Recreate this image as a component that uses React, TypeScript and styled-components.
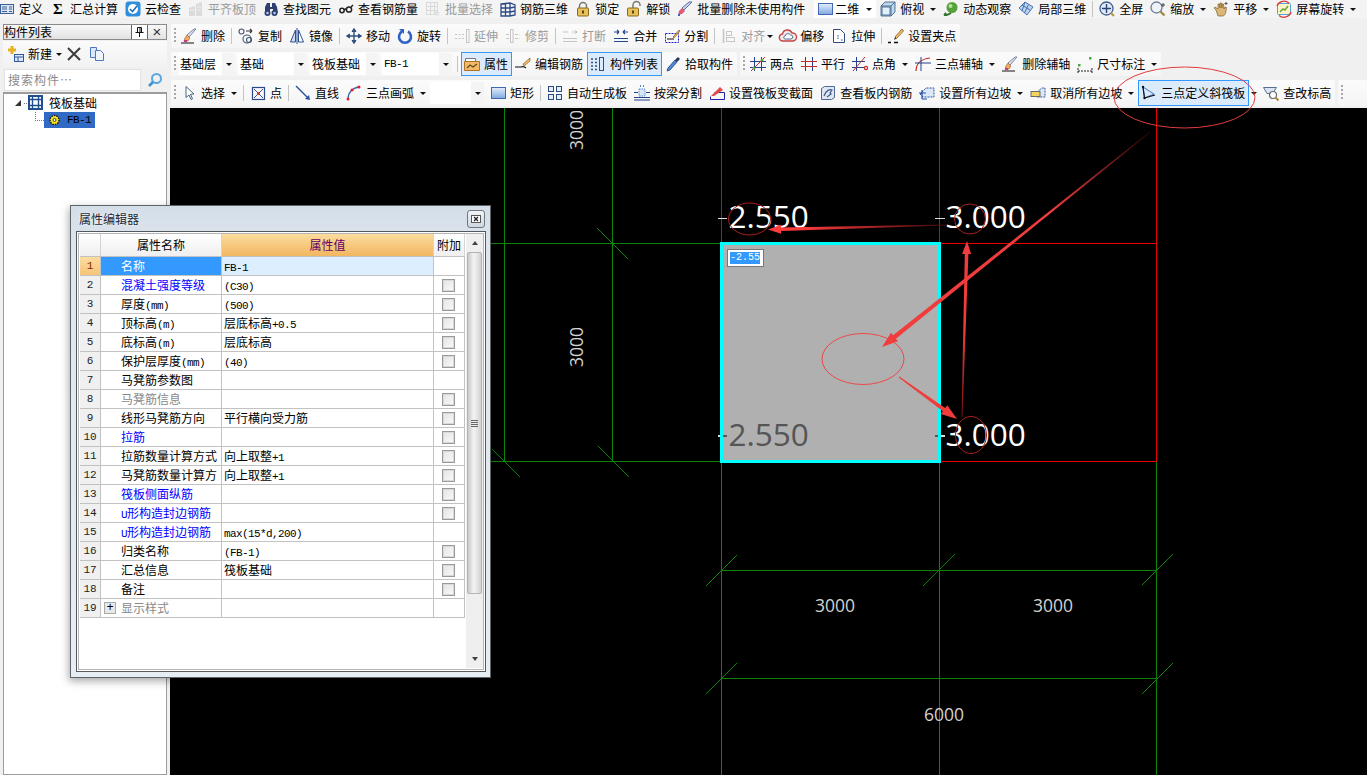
import React from "react";
import styled, { createGlobalStyle } from "styled-components";

const CJK = '"Noto Sans CJK SC", "Noto Sans", sans-serif';

const GlobalStyle = createGlobalStyle`
  html, body { margin: 0; padding: 0; background: #f0f0f0; }
  body { font: 12px/16px ${CJK}; color: #000; overflow: hidden; }
  * { box-sizing: border-box; }
`;

const Page = styled.div`
  position: relative;
  width: 1367px;
  height: 775px;
  overflow: hidden;
  display: flex;
  flex-direction: column;
  background: #f0f0f0;
`;

const TopBar = styled.div`
  height: 18px;
  flex: none;
  margin-left: -4px;
  display: flex;
  align-items: center;
  background: #f4f4f4;
`;

const Body = styled.div`
  flex: 1;
  min-height: 0;
  display: flex;
`;

const Main = styled.div`
  flex: 1;
  min-width: 0;
  display: flex;
  flex-direction: column;
  padding-top: 6px;
`;

const ToolRow = styled.div<{ $h?: number; $after?: number }>`
  flex: none;
  height: ${(p) => p.$h ?? 24}px;
  margin: 0 0 ${(p) => p.$after ?? 4}px 1px;
  display: flex;
  gap: 3px;
`;

const Segment = styled.div<{ $grow?: boolean }>`
  display: flex;
  align-items: center;
  height: 100%;
  flex: ${(p) => (p.$grow ? 1 : "none")};
  background: linear-gradient(#fbfbfb, #f5f5f5);
  border-radius: 2px;
`;

const Gripper = styled.i`
  width: 2px;
  height: 16px;
  margin: 0 2px 0 3px;
  flex: none;
  background: repeating-linear-gradient(#a8a8a8 0 2px, transparent 2px 4px);
`;

const Sep = styled.i`
  width: 1px;
  height: 16px;
  margin: 0 3px 0 2px;
  flex: none;
  background: #c4c4c4;
`;

const Tool = styled.div<{ $dim?: boolean; $on?: boolean }>`
  display: flex;
  align-items: center;
  flex: none;
  gap: 4px;
  height: ${(p) => (p.$on ? "100%" : "auto")};
  padding: ${(p) => (p.$on ? "0 3px 0 2px" : "0 4px 0 3px")};
  white-space: nowrap;
  color: ${(p) => (p.$dim ? "#9a9a9a" : "#000")};
  border: ${(p) => (p.$on ? "1px solid #3399ff" : "0")};
  background: ${(p) => (p.$on ? "#dcebfb" : "transparent")};
`;

const Glyph = styled.svg<{ $dim?: boolean }>`
  width: 16px;
  height: 16px;
  flex: none;
  overflow: visible;
  opacity: ${(p) => (p.$dim ? 0.45 : 1)};
`;

const Sigma = styled.b`
  width: 16px;
  text-align: center;
  font: bold 15px/16px "Liberation Serif", serif;
  flex: none;
`;

const Caret = styled.i<{ $m?: number; $after?: number }>`
  width: 0;
  height: 0;
  flex: none;
  margin-left: ${(p) => p.$m ?? 2}px;
  margin-right: ${(p) => p.$after ?? 0}px;
  border-left: 3px solid transparent;
  border-right: 3px solid transparent;
  border-top: 3px solid #111;
`;

const ViewMode = styled.div`
  display: flex;
  align-items: center;
  gap: 2px;
  width: 62px;
  height: 18px;
  margin: 0 1px 0 5px;
  padding-left: 3px;
  background: #fff;
  flex: none;
`;

const Combo = styled.div<{ $w: number }>`
  display: flex;
  align-items: center;
  justify-content: space-between;
  width: ${(p) => p.$w}px;
  height: 22px;
  margin-right: 3px;
  padding-left: 2px;
  flex: none;
  background: #fff;
`;

const ComboArrow = styled.div`
  width: 13px;
  height: 22px;
  display: flex;
  align-items: center;
  justify-content: center;
  background: #f4f4f4;
`;

const Latin = styled.span`
  font: 11px/1 "Liberation Mono", monospace;
  letter-spacing: -0.6px;
`;

/* ascii runs sit at half a CJK cell, like the bitmap font of the original */
const Txt = ({ s }: { s: string }) => (
  <>
    {s.split(/([\x00-\x7f]+)/).map((part, i) =>
      /^[\x00-\x7f]+$/.test(part) ? <Latin key={i}>{part}</Latin> : part
    )}
  </>
);

const ICONS: Record<string, React.ReactNode> = {
  define: (
    <g fill="none" stroke="#3c5f95">
      <rect x="1.5" y="3.5" width="13" height="9" fill="#dbe6f3" />
      <path d="M3 6h5M3 8h5M3 10.500h5M10 6h3M10 8h3M10 10.500h3" />
    </g>
  ),
  cloud: (
    <g>
      <rect x="0.500" y="0.500" width="15" height="15" rx="3" fill="#2f8fdd" />
      <circle cx="8" cy="8" r="5" fill="#fff" />
      <path d="M5 8l2.500 2.500L12 5" fill="none" stroke="#1f6fb8" strokeWidth="1.600" />
    </g>
  ),
  plate: (
    <g fill="#bdbdbd">
      <path d="M1 15V7l6-2v10zM8 15V3l6-2v14z" />
      <path d="M2 9h4M9 6h4M9 9h4" stroke="#eee" />
    </g>
  ),
  binoc: (
    <g fill="#2d3f73">
      <path d="M2 6l2-4h3v4h2V2h3l2 4 1 6h-5V8H7v4H2z" />
      <circle cx="4.500" cy="12" r="3" />
      <circle cx="11.500" cy="12" r="3" />
      <circle cx="4.500" cy="12" r="1.300" fill="#b8c8ea" />
      <circle cx="11.500" cy="12" r="1.300" fill="#b8c8ea" />
    </g>
  ),
  glasses: (
    <g fill="none" stroke="#222" strokeWidth="1.500">
      <circle cx="4" cy="9.500" r="2.200" />
      <circle cx="11" cy="8.500" r="2.600" />
      <path d="M6 9c1-1 2-1 2.500-.5M13 6l2-2" />
    </g>
  ),
  batch: (
    <g fill="none" stroke="#bbb">
      <rect x="1.500" y="1.500" width="11" height="12" />
      <path d="M1.500 5.500h11M1.500 9.500h11M5.500 1.500v12M9.500 1.500v12" />
      <path d="M10 9l5 3-2 1 1 2-1 .5-1-2-2 1z" fill="#ccc" stroke="none" />
    </g>
  ),
  rebar3d: (
    <g fill="none" stroke="#2c4a86" strokeWidth="1.300">
      <path d="M1 3l9-1 5 2v10l-5 1H1zM1 3v12M10 2v13M1 7h9l5-1M1 11h9l5-1M5.500 3v12" />
    </g>
  ),
  lock: (
    <g>
      <path d="M4.500 7V5a3.500 3.500 0 017 0v2" fill="none" stroke="#777" strokeWidth="1.500" />
      <rect x="2.500" y="7" width="11" height="8" rx="1" fill="#e8c15a" stroke="#8b6b1e" />
      <rect x="7" y="9.500" width="2" height="3" fill="#5a4310" />
    </g>
  ),
  unlock: (
    <g>
      <path d="M7 7V4a3.500 3.500 0 017 0v1" fill="none" stroke="#777" strokeWidth="1.500" />
      <rect x="1.500" y="7" width="11" height="8" rx="1" fill="#e8c15a" stroke="#8b6b1e" />
      <rect x="6" y="9.500" width="2" height="3" fill="#5a4310" />
    </g>
  ),
  brushBlue: (
    <g>
      <path d="M15 1L7 9l-2-2 7-6z" fill="#c9d4ea" stroke="#5a6f9f" />
      <path d="M5 7l3 3-3 3-4 1 1-4z" fill="#e05a7a" />
      <path d="M1 14h2" stroke="#3b66c4" strokeWidth="2" />
    </g>
  ),
  rect2d: (
    <g>
      <rect x="1.500" y="2.500" width="14" height="11" fill="url(#blueFill)" stroke="#4169b0" />
    </g>
  ),
  cube: (
    <g stroke="#33557f" strokeWidth="0.800">
      <path d="M1 5l4-4h10v10l-4 4H1z" fill="#bcd9ee" />
      <path d="M1 5h10v10M11 5l4-4" fill="none" />
      <path d="M2 6h8v8H2z" fill="#e2f0fa" />
    </g>
  ),
  orbit: (
    <g>
      <circle cx="9" cy="6.500" r="5.500" fill="#53a33a" />
      <circle cx="7.500" cy="5" r="2" fill="#b6e29a" />
      <path d="M1 13c2 2 4 1 7-1" fill="none" stroke="#2f6f28" strokeWidth="2" />
      <path d="M1 15l1-4 3 3z" fill="#2f6f28" />
    </g>
  ),
  local3d: (
    <g fill="#bcd4f0" stroke="#3b66a8" strokeWidth="0.900">
      <path d="M1 7l6-6 8 5-6 8z" />
      <path d="M4 4l8 5M7 1l-3 9M10.500 3.500L6.500 12" fill="none" />
    </g>
  ),
  fullscreen: (
    <g>
      <circle cx="7.500" cy="7.500" r="6.500" fill="#e2eaf5" stroke="#3f5f8f" strokeWidth="1.300" />
      <path d="M7.500 3v9M3 7.500h9" stroke="#27437a" strokeWidth="1.400" />
      <path d="M12 12l3 3" stroke="#b99a4a" strokeWidth="2.200" />
    </g>
  ),
  zoomTool: (
    <g>
      <circle cx="6.500" cy="6.500" r="5.500" fill="#eef3f9" stroke="#6f7f96" strokeWidth="1.300" />
      <path d="M10.500 10.500l4 4" stroke="#a58a3e" strokeWidth="2.400" />
      <path d="M13 2v4M11 4h4" stroke="#444" />
    </g>
  ),
  hand: (
    <g>
      <path d="M3 9l-2-2 1-1 3 2V3l1.500 0 .5 4V2h1.500l.5 5V3h1.500l.5 5 1-2 1.500.5-1 6-2 2.500H5z" fill="#dcb878" stroke="#7b5f2c" strokeWidth="0.700" />
      <path d="M13 1v3M11.500 2.500h3" stroke="#555" />
    </g>
  ),
  screenRot: (
    <g>
      <rect x="1.500" y="2.500" width="13" height="11" rx="1" fill="#fff4c8" stroke="#57a0d8" />
      <path d="M4 11l3-3 2 1 3-4" fill="none" stroke="#6aa63a" strokeWidth="1.500" />
      <path d="M1 5a7.500 7.500 0 0112-3M15 11a7.500 7.500 0 01-12 3.500" fill="none" stroke="#d93a3a" strokeWidth="1.300" />
    </g>
  ),
  erase: (
    <g>
      <path d="M15 1L8 9 6 7l7-6z" fill="#dfe3ee" stroke="#7a86a5" />
      <path d="M6 7l3 3-2 3H3l1-3z" fill="#f0a868" stroke="#a66a2e" strokeWidth="0.700" />
      <path d="M0 15h13" stroke="#111" />
      <path d="M3 13h3" stroke="#c33b7d" strokeWidth="2" />
    </g>
  ),
  copy: (
    <g fill="none" stroke="#44546f" strokeWidth="1.100">
      <circle cx="3.500" cy="3.500" r="2.500" />
      <circle cx="9" cy="11" r="4" />
      <circle cx="11" cy="12" r="2.500" />
      <path d="M8 3h6M14 3l-2-2M14 3l-2 2" stroke="#333" />
    </g>
  ),
  mirror: (
    <g stroke="#2d4f8f" fill="#cfe0f5">
      <path d="M6.500 2L1.500 14h5z" />
      <path d="M9.500 2l5 12h-5z" fill="#fff" />
      <path d="M8 0v16" fill="none" />
    </g>
  ),
  move: (
    <g fill="#33507f" stroke="#33507f">
      <path d="M8 1v14M1 8h14" fill="none" strokeWidth="1.400" />
      <path d="M8 .500L6 3.500h4zM8 15.500l-2-3h4zM.500 8l3-2v4zM15.500 8l-3-2v4z" />
    </g>
  ),
  rotate: (
    <g>
      <path d="M5 3.500a6 6 0 106 0" fill="none" stroke="#2f62c4" strokeWidth="2.600" />
      <path d="M2 1l5 0 0 5z" fill="#2f62c4" />
    </g>
  ),
  extend: (
    <g stroke="#888" fill="none">
      <path d="M1 6.500h10M1 10.500h10" strokeDasharray="2 1.500" />
      <rect x="12.500" y="1.500" width="2.500" height="13" fill="#fff" />
    </g>
  ),
  trim: (
    <g stroke="#888" fill="none">
      <path d="M1 6.500h14M1 10.500h14" strokeDasharray="3 1.500" />
      <rect x="5.500" y="1.500" width="2.500" height="13" fill="#fff" />
    </g>
  ),
  breakLine: (
    <g stroke="#888" fill="none">
      <path d="M1 4h5M10 4h5M13 2l2 2-2 2M1 13.500h14M1 10.500h14" />
    </g>
  ),
  merge: (
    <g stroke="#24488f" fill="none" strokeWidth="1.200">
      <path d="M1 4h5M6 4L4 2M6 4L4 6M15 4h-5M10 4l2-2M10 4l2 2M1 10.500h14M1 13.500h14" />
    </g>
  ),
  split: (
    <g fill="none">
      <rect x="1.500" y="5.500" width="13" height="9" stroke="#2222cc" strokeDasharray="2 1" />
      <path d="M3 11h7" stroke="#111" />
      <path d="M9 9l6-7 1 1-6 7z" fill="#f4b060" stroke="#8a5c1c" strokeWidth="0.700" />
    </g>
  ),
  alignTool: (
    <g stroke="#8c8c8c" fill="none">
      <path d="M2.500 1v14" strokeWidth="1.600" />
      <rect x="5.500" y="3.500" width="5" height="4" />
      <rect x="5.500" y="9.500" width="8" height="4" />
    </g>
  ),
  offset: (
    <g>
      <path d="M3 13a3.500 3.500 0 01-.5-7 5 5 0 019.500-1 4 4 0 011 8z" fill="#f7e8e8" stroke="#c44646" strokeWidth="1.400" />
      <path d="M5.500 11a1.500 1.500 0 01-.5-3 3 3 0 015.500-1 2 2 0 01.5 4z" fill="#fff" stroke="#4a6a9a" />
    </g>
  ),
  stretch: (
    <g fill="none" stroke="#2c4a80">
      <path d="M2.500 1.500h7l4 4v9h-11z" fill="#fff" />
      <path d="M7 7v5M10 12h2" strokeDasharray="1.500 1" />
    </g>
  ),
  grip: (
    <g>
      <path d="M14 1L7 9l1.500 1.500L15.500 3z" fill="#f0bd6c" stroke="#8a5c1c" strokeWidth="0.800" />
      <path d="M7 9l-1 3 2.500-1.500z" fill="#333" />
      <path d="M0 14.500h3M6 14.500h4" stroke="#111" strokeWidth="1.500" />
    </g>
  ),
  props: (
    <g>
      <path d="M1.500 2.500h10v3h-10z" fill="#fff" stroke="#777" />
      <path d="M.500 5.500h15v9H.500z" fill="#f5b864" stroke="#a9742a" />
      <path d="M3 12l3-3 3 2 4-3" fill="none" stroke="#5c4a22" strokeWidth="1.200" />
    </g>
  ),
  editBar: (
    <g>
      <path d="M15 2L8 8l1 2 6-5z" fill="#f0c070" stroke="#8a5c1c" strokeWidth="0.700" />
      <path d="M0 11h6c2-1 3-1 5 1" fill="none" stroke="#111" strokeWidth="1.200" />
    </g>
  ),
  listTool: (
    <g fill="none" stroke="#334f7e">
      <rect x="9.500" y="1.500" width="4" height="13" />
      <path d="M1 3h2M5 3h2M1 6.500h2M5 6.500h2M1 10h2M5 10h2M1 13.500h2M5 13.500h2" strokeWidth="1.300" />
    </g>
  ),
  pick: (
    <g>
      <path d="M13 1l2 2-3 3-2-2z" fill="#22365f" />
      <path d="M10 4l2 2-7 8-3 1 1-3z" fill="#4f88d8" stroke="#1f3e75" strokeWidth="0.800" />
    </g>
  ),
  twoPoint: (
    <g fill="none">
      <path d="M4.500 1v14M11.500 1v14M0 5.500h16M0 11.500h16" stroke="#27408b" />
      <path d="M1 15L15 1" stroke="#c82a2a" />
      <circle cx="4" cy="12" r="1.500" fill="#5ba33a" />
      <circle cx="12" cy="4" r="1.500" fill="#5ba33a" />
    </g>
  ),
  parallel: (
    <g fill="none">
      <path d="M4.500 1v14M11.500 1v14" stroke="#27408b" />
      <path d="M0 5.500h16M0 10.500h16" stroke="#c82a2a" />
    </g>
  ),
  angle: (
    <g fill="none">
      <path d="M4.500 1v14M0 5.500h13M0 11.500h13" stroke="#27408b" />
      <path d="M1 15L13 1" stroke="#c82a2a" />
      <circle cx="14" cy="12" r="1.600" stroke="#c82a2a" strokeWidth="1.200" />
    </g>
  ),
  threeAxis: (
    <g fill="none">
      <path d="M1 15C1 8 6 3 15 2" stroke="#c82a2a" strokeWidth="1.200" />
      <path d="M6 1v14M0 7h16" stroke="#27408b" />
    </g>
  ),
  dimension: (
    <g>
      <path d="M1 15h14M1 12v5M15 12v5" stroke="#222" strokeDasharray="2 1" />
      <rect x="1" y="8" width="2.500" height="2.500" fill="#4aa84a" />
      <rect x="12" y="1" width="2.500" height="2.500" fill="#4aa84a" />
    </g>
  ),
  select: (
    <path d="M5 1.500v11l3-2.500 2 4.500 1.500-.7-2-4.500 3.500-.3z" fill="#fff" stroke="#4c6384" />
  ),
  point: (
    <g fill="none">
      <rect x="2.500" y="2.500" width="12" height="12" stroke="#2c4a86" strokeWidth="1.200" />
      <path d="M4 4l9 9M13 4l-9 9" stroke="#3d4fb0" />
      <circle cx="8.500" cy="8.500" r="1.200" fill="#c22" />
    </g>
  ),
  line: (
    <g>
      <path d="M1 1l12 12" stroke="#27549a" strokeWidth="1.400" />
      <path d="M15 15l-5-1 4-4z" fill="#27549a" />
    </g>
  ),
  arc: (
    <g fill="none">
      <path d="M2 14C2 8 6 3 13 2" stroke="#3a65b8" strokeWidth="1.300" />
      <circle cx="2" cy="14" r="1.500" fill="#d23" />
      <circle cx="6" cy="5" r="1.500" fill="#d23" />
      <circle cx="13" cy="2" r="1.500" fill="#d23" />
    </g>
  ),
  auto: (
    <g fill="#e6eef9" stroke="#2c4a80">
      <rect x="1.500" y="1.500" width="5" height="5" />
      <rect x="9.500" y="1.500" width="5" height="5" />
      <rect x="1.500" y="9.500" width="5" height="5" />
      <rect x="9.500" y="9.500" width="5" height="5" />
    </g>
  ),
  beamSplit: (
    <g fill="none">
      <path d="M0 12.500h16M0 15h16" stroke="#27408b" />
      <path d="M0 7.500h4M12 7.500h4" stroke="#27408b" />
      <rect x="5" y="4" width="6" height="7" fill="#d8e6fa" stroke="#5a86cc" strokeDasharray="1.500 1" />
      <path d="M6 1h1M9 1h1" stroke="#5a86cc" strokeWidth="2" />
    </g>
  ),
  section: (
    <g fill="none">
      <path d="M5.500 7.500h10v7h-14v-3" stroke="#2222aa" />
      <path d="M2 11l9-9 3 3-9 6z" fill="#e34b4b" />
    </g>
  ),
  viewBar: (
    <g>
      <path d="M1.500 3.500l3-2h10v11l-3 2h-10z" fill="#dfe7f3" stroke="#4e6a94" />
      <path d="M4 11c2-6 6-7 8-6l-2 3 1 1-4 3" fill="none" stroke="#3b5a8c" strokeWidth="1.200" />
    </g>
  ),
  slopeAll: (
    <g fill="none">
      <path d="M1 9l6-6h8v9H4z" fill="#dce8f8" stroke="#2f5aa0" strokeDasharray="2 1" />
      <path d="M0 8h7M3 5v9M3 14h5" stroke="#1e4aa5" strokeWidth="1.200" />
    </g>
  ),
  slopeNone: (
    <g>
      <path d="M7 7l5-4h3v9H7z" fill="#dce8f8" stroke="#2f5aa0" strokeDasharray="2 1" />
      <rect x="1" y="6.500" width="9" height="5" fill="#f2d65c" stroke="#6a6a6a" />
    </g>
  ),
  threeSlope: (
    <g fill="none">
      <path d="M2 2l1.500 11L13 9z" fill="#dbe8fa" stroke="#4577c8" />
      <path d="M2 2l1.500 11M3.500 13L14 10" stroke="#111" strokeWidth="1.200" />
      <circle cx="2" cy="2" r="1.200" fill="#111" />
      <circle cx="3.500" cy="13" r="1.200" fill="#111" />
    </g>
  ),
  changeElev: (
    <g>
      <path d="M.500 2.500h13l-4 6H4z" fill="#dbe4f2" stroke="#5a6f90" />
      <circle cx="10" cy="10" r="3.500" fill="#fff" stroke="#6a6a6a" strokeWidth="1.200" />
      <path d="M12.500 12.500l3 3" stroke="#a58a3e" strokeWidth="2" />
    </g>
  ),
  newItem: (
    <g>
      <path d="M4 0v8M0 4h8" stroke="#e6b422" strokeWidth="3" />
      <rect x="6.500" y="8.500" width="9" height="7" fill="#dce8f8" stroke="#2f5aa0" />
      <path d="M6.500 11h9M10 11v4.500" stroke="#2f5aa0" />
    </g>
  ),
  xDelete: <path d="M2 2l12 12M14 2L2 14" stroke="#3d3d3d" strokeWidth="2" />,
  copyDoc: (
    <g fill="#dbe8fa" stroke="#4a78c0">
      <path d="M1.500 1.500h6v10h-6z" />
      <path d="M6.500 4.500h5l3 3v7h-8z" fill="#eff5fd" />
    </g>
  ),
  magnify: (
    <g fill="none">
      <circle cx="9.500" cy="6.500" r="4.500" stroke="#5aa7e0" strokeWidth="2" />
      <path d="M6 10l-4 4" stroke="#3f92d2" strokeWidth="2.600" />
    </g>
  ),
  raft: (
    <g fill="none" stroke="#1f4f8f">
      <rect x="0" y="1" width="13" height="13" strokeWidth="2" />
      <path d="M0 4.500h13M0 10.500h13M3.500 1v13M9.500 1v13" strokeWidth="1.400" />
    </g>
  ),
  gear: (
    <g>
      <circle cx="6.500" cy="8" r="4.500" fill="#f8e81c" stroke="#111" strokeWidth="1.400" strokeDasharray="1.500 1" />
      <circle cx="6.500" cy="8" r="1.500" fill="#fff" stroke="#111" strokeWidth="0.800" />
    </g>
  ),
};

const Icon = ({ name, dim }: { name: string; dim?: boolean }) => (
  <Glyph viewBox="0 0 16 16" $dim={dim}>
    {ICONS[name]}
  </Glyph>
);

type ToolFlags = { caret: boolean; near: boolean; dim: boolean; on: boolean };
type ToolDef = ({ i: string; t: string } & Partial<ToolFlags>) | "sep";

const tool = (i: string, t: string, flags: Partial<ToolFlags> = {}): ToolDef => ({
  i,
  t,
  ...flags,
});

const renderTools = (list: ToolDef[]) =>
  list.map((d, n) =>
    d === "sep" ? (
      <Sep key={n} />
    ) : (
      <Tool key={n} $dim={d.dim} $on={d.on}>
        <Icon name={d.i} dim={d.dim} />
        <span>{d.t}</span>
        {d.caret && <Caret $m={d.near ? -2 : 2} />}
      </Tool>
    )
  );

const topLeft: ToolDef[] = [tool("define", "定义")];
const topMiddle: ToolDef[] = [
  tool("cloud", "云检查"),
  tool("plate", "平齐板顶", { dim: true }),
  tool("binoc", "查找图元"),
  tool("glasses", "查看钢筋量"),
  tool("batch", "批量选择", { dim: true }),
  tool("rebar3d", "钢筋三维"),
  tool("lock", "锁定"),
  tool("unlock", "解锁"),
  tool("brushBlue", "批量删除未使用构件"),
];
const topRight: ToolDef[] = [
  tool("cube", "俯视", { caret: true }),
  tool("orbit", "动态观察"),
  tool("local3d", "局部三维"),
  "sep",
  tool("fullscreen", "全屏"),
  tool("zoomTool", "缩放", { caret: true }),
  tool("hand", "平移", { caret: true }),
  tool("screenRot", "屏幕旋转", { caret: true }),
];

const editTools: ToolDef[] = [
  tool("erase", "删除"),
  "sep",
  tool("copy", "复制"),
  tool("mirror", "镜像"),
  "sep",
  tool("move", "移动"),
  tool("rotate", "旋转"),
  "sep",
  tool("extend", "延伸", { dim: true }),
  tool("trim", "修剪", { dim: true }),
  "sep",
  tool("breakLine", "打断", { dim: true }),
  tool("merge", "合并"),
  tool("split", "分割"),
  "sep",
  tool("alignTool", "对齐", { dim: true, caret: true, near: true }),
  tool("offset", "偏移"),
  tool("stretch", "拉伸"),
  "sep",
  tool("grip", "设置夹点"),
];

const componentTools: ToolDef[] = [
  tool("props", "属性", { on: true }),
  tool("editBar", "编辑钢筋"),
  tool("listTool", "构件列表", { on: true }),
  tool("pick", "拾取构件"),
];

const axisTools: ToolDef[] = [
  tool("twoPoint", "两点"),
  tool("parallel", "平行"),
  tool("angle", "点角", { caret: true }),
  tool("threeAxis", "三点辅轴", { caret: true }),
  tool("erase", "删除辅轴"),
  tool("dimension", "尺寸标注", { caret: true }),
];

const drawLeft: ToolDef[] = [
  tool("select", "选择", { caret: true }),
  "sep",
  tool("point", "点"),
  "sep",
  tool("line", "直线"),
  tool("arc", "三点画弧", { caret: true }),
];
const drawRight: ToolDef[] = [
  tool("rect2d", "矩形"),
  "sep",
  tool("auto", "自动生成板"),
  tool("beamSplit", "按梁分割"),
  tool("section", "设置筏板变截面"),
  tool("viewBar", "查看板内钢筋"),
  tool("slopeAll", "设置所有边坡", { caret: true }),
  tool("slopeNone", "取消所有边坡", { caret: true }),
  tool("threeSlope", "三点定义斜筏板", { on: true }),
];

const LeftPanel = styled.aside`
  width: 167px;
  margin-right: 3px;
  flex: none;
  padding: 6px 0 0 3px;
  display: flex;
  flex-direction: column;
`;

const PanelTitle = styled.div`
  height: 16px;
  display: flex;
  align-items: center;
  justify-content: space-between;
  border: 1px solid #8a8a8a;
  background: linear-gradient(#f8f8f8, #e2e2e2);
  line-height: 14px;
`;

const PanelControls = styled.div`
  display: flex;
  align-items: center;
`;

const PinBox = styled.span`
  width: 17px;
  height: 14px;
  display: flex;
  align-items: center;
  justify-content: center;
  background: #fff;
  border-left: 1px solid #666;
  border-right: 1px solid #666;
`;

const CloseMark = styled.span`
  width: 18px;
  text-align: center;
  font: 15px/14px "Liberation Sans", sans-serif;
  color: #333;
`;

const PanelTools = styled.div`
  height: 26px;
  display: flex;
  align-items: center;
  gap: 4px;
  padding-left: 5px;
  margin-top: 1px;
  background: linear-gradient(#fafafa, #f2f2f2);
`;

const CopySlot = styled.span`
  display: flex;
  margin-left: 3px;
`;

const SearchRow = styled.div`
  height: 25px;
  display: flex;
  align-items: center;
  gap: 6px;
  padding-left: 1px;
`;

const SearchBox = styled.div`
  width: 137px;
  height: 22px;
  padding-left: 3px;
  line-height: 20px;
  color: #8a8a8a;
  background: #fff;
  border: 1px solid #e2e2e2;
  letter-spacing: 1px;
`;

const TreeBox = styled.div`
  flex: 1;
  display: flex;
  flex-direction: column;
  gap: 1px;
  background: #fff;
  border: 1px solid #9c9c9c;
  border-top-width: 2px;
  padding: 1px 0 0 10px;
`;

const TreeRow = styled.div`
  height: 16px;
  display: flex;
  align-items: center;
`;

const TreeArrow = styled.i`
  width: 0;
  height: 0;
  margin: 0 3px 0 1px;
  border-left: 6px solid transparent;
  border-bottom: 6px solid #333;
`;

const DotLine = styled.i`
  width: 5px;
  border-top: 1px dotted #777;
`;

const TreeLabel = styled.span`
  margin-left: 4px;
`;

const Elbow = styled.i`
  width: 9px;
  height: 9px;
  margin: -8px 0 0 21px;
  border-left: 1px dotted #777;
  border-bottom: 1px dotted #777;
`;

const TreeSelected = styled.div`
  display: flex;
  align-items: center;
  gap: 3px;
  width: 51px;
  height: 16px;
  padding-left: 4px;
  background: #316ac5;
`;

const Canvas = styled.div`
  position: relative;
  flex: 1;
  min-height: 0;
  background: #000;
`;

const Drawing = styled.svg`
  display: block;
  width: 100%;
  height: 100%;
`;

const ElevationInput = styled.div`
  position: absolute;
  left: 557px;
  top: 141px;
  width: 37px;
  height: 18px;
  padding: 2px 3px 2px 2px;
  background: #fff;
  border: 1px solid #777;
`;

const InputSelection = styled.span`
  display: block;
  height: 12px;
  background: #3399ff;
  color: #fff;
  font: 10px/12px "Liberation Mono", monospace;
`;

const Annotations = styled.svg`
  position: absolute;
  left: 0;
  top: 0;
  pointer-events: none;
`;

/* floating editor window */
const Dialog = styled.section`
  position: absolute;
  left: 70px;
  top: 205px;
  width: 421px;
  height: 473px;
  display: flex;
  flex-direction: column;
  padding: 0 4px 5px 5px;
  background: linear-gradient(#d4dee8, #dde6ee 40px, #e6edf3);
  border: 1px solid #5f6468;
  box-shadow: -1px 3px 8px rgba(0, 0, 0, 0.35);
`;

const DialogTitle = styled.header`
  flex: none;
  height: 25px;
  display: flex;
  align-items: center;
  justify-content: space-between;
  padding: 0 1px 0 3px;
  color: #1a2a3a;
  text-shadow: 0 0 3px #fff;
`;

const DialogClose = styled.button`
  width: 18px;
  height: 18px;
  padding: 0;
  display: flex;
  align-items: center;
  justify-content: center;
  background: linear-gradient(#f2f5f8, #cfd8e0);
  border: 1px solid #70787f;
  border-radius: 3px;
`;

const Frame = styled.div`
  flex: 1;
  min-height: 0;
  display: flex;
  padding: 2px 3px 3px 3px;
  background: #fff;
  border: 1px solid #55595d;
  box-shadow: inset 0 0 0 1px #fff, inset 0 0 0 2px #b5b5b5;
`;

const Table = styled.div`
  width: 385px;
  flex: none;
`;

const COLS = "21px 121px 212px 31px";

const HeadRow = styled.div`
  display: grid;
  grid-template-columns: ${COLS};
  height: 23px;
  border-bottom: 1px solid #c2c2c2;
`;

const HeadCell = styled.div<{ $value?: boolean }>`
  display: flex;
  align-items: center;
  justify-content: center;
  border-right: 1px solid #d4d4d4;
  color: ${(p) => (p.$value ? "#660066" : "#000")};
  background: ${(p) =>
    p.$value ? "linear-gradient(#fbdc9e, #f2b660)" : "linear-gradient(#fff, #efefef)"};
`;

const DataRow = styled.div`
  display: grid;
  grid-template-columns: ${COLS};
  grid-template-rows: 18px;
  height: 19px;
  border-bottom: 1px solid #c2c2c2;
`;

const NumCell = styled.div<{ $on?: boolean }>`
  display: flex;
  align-items: center;
  justify-content: center;
  font: 11px/16px "Liberation Mono", monospace;
  color: ${(p) => (p.$on ? "#8a2a00" : "#222")};
  background: ${(p) => (p.$on ? "linear-gradient(#fbdc9e, #f6c478)" : "#f0f0f0")};
  border-right: 1px solid #c2c2c2;
`;

type Tone = "normal" | "link" | "muted" | "selected";

const toneColor: Record<Tone, string> = {
  normal: "#000",
  link: "#0000ff",
  muted: "#888",
  selected: "#fff",
};

const NameCell = styled.div<{ $tone: Tone }>`
  position: relative;
  padding-left: 20px;
  line-height: 18px;
  white-space: nowrap;
  overflow: hidden;
  color: ${(p) => toneColor[p.$tone]};
  background: ${(p) => (p.$tone === "selected" ? "#3399ff" : "#fff")};
  border-right: 1px solid #c2c2c2;
`;

const ValueCell = styled.div<{ $on?: boolean }>`
  padding-left: 2px;
  line-height: 18px;
  white-space: nowrap;
  overflow: hidden;
  background: ${(p) => (p.$on ? "#ddeeff" : "#fff")};
  border-right: 1px solid #c2c2c2;
`;

const AddCell = styled.div`
  display: flex;
  align-items: center;
  justify-content: center;
  border-right: 1px solid #c2c2c2;
`;

const Check = styled.i`
  width: 13px;
  height: 13px;
  margin-left: -1px;
  background: linear-gradient(135deg, #e4e4e4, #fafafa);
  border: 1px solid #9a9a9a;
  box-shadow: inset 0 0 0 1px #d8d8d8;
`;

const Expander = styled.i`
  position: absolute;
  left: 3px;
  top: 3px;
  width: 12px;
  height: 12px;
  border: 1px solid #aaa;
  background: #e8e8e8;
  color: #000;
  font: normal 12px/10px "Liberation Mono", monospace;
  text-align: center;
`;

const ScrollBar = styled.div`
  width: 17px;
  margin-left: 1px;
  flex: none;
  display: flex;
  flex-direction: column;
  background: #efefef;
`;

const ScrollEnd = styled.div<{ $down?: boolean }>`
  height: 18px;
  flex: none;
  display: flex;
  align-items: center;
  justify-content: center;
  &::before {
    content: "";
    border-left: 3px solid transparent;
    border-right: 3px solid transparent;
    ${(p) => (p.$down ? "border-top" : "border-bottom")}: 4px solid #444;
  }
`;

const ScrollThumb = styled.div`
  height: 342px;
  flex: none;
  margin: 0 1px;
  display: flex;
  align-items: center;
  justify-content: center;
  border: 1px solid #b4b4b4;
  border-radius: 2px;
  background: linear-gradient(90deg, #c8c8c8, #f4f4f4 45%, #d2d2d2);
  &::after {
    content: "";
    width: 7px;
    height: 7px;
    background: repeating-linear-gradient(#666 0 1px, transparent 1px 2px);
  }
`;

const ScrollTrack = styled.div`
  flex: 1;
`;

type Prop = { name: string; value?: string; tone?: Tone; check?: boolean };

const props_: Prop[] = [
  { name: "名称", value: "FB-1", tone: "selected" },
  { name: "混凝土强度等级", value: "(C30)", tone: "link", check: true },
  { name: "厚度(mm)", value: "(500)", check: true },
  { name: "顶标高(m)", value: "层底标高+0.5", check: true },
  { name: "底标高(m)", value: "层底标高", check: true },
  { name: "保护层厚度(mm)", value: "(40)", check: true },
  { name: "马凳筋参数图" },
  { name: "马凳筋信息", tone: "muted", check: true },
  { name: "线形马凳筋方向", value: "平行横向受力筋", check: true },
  { name: "拉筋", tone: "link", check: true },
  { name: "拉筋数量计算方式", value: "向上取整+1", check: true },
  { name: "马凳筋数量计算方", value: "向上取整+1", check: true },
  { name: "筏板侧面纵筋", tone: "link", check: true },
  { name: "U形构造封边钢筋", tone: "link", check: true },
  { name: "U形构造封边钢筋", value: "max(15*d,200)", tone: "link" },
  { name: "归类名称", value: "(FB-1)", check: true },
  { name: "汇总信息", value: "筏板基础", check: true },
  { name: "备注", check: true },
  { name: "显示样式", tone: "muted" },
];

/* tapering hand-drawn arrow, as a polygon from tail to tip */
const arrowPoints = (x1: number, y1: number, x2: number, y2: number, head: number, neck: number, wing: number) => {
  const len = Math.hypot(x2 - x1, y2 - y1);
  const ux = (x2 - x1) / len;
  const uy = (y2 - y1) / len;
  const nx = -uy;
  const ny = ux;
  const bx = x2 - ux * head;
  const by = y2 - uy * head;
  const tail = 0.5;
  const pts = [
    [x1 + nx * tail, y1 + ny * tail],
    [bx + nx * neck, by + ny * neck],
    [bx + nx * wing, by + ny * wing],
    [x2, y2],
    [bx - nx * wing, by - ny * wing],
    [bx - nx * neck, by - ny * neck],
    [x1 - nx * tail, y1 - ny * tail],
  ];
  return pts.map((p) => p.map((v) => v.toFixed(1)).join(",")).join(" ");
};

const GREEN = "#0a850a";
const RED = "#e80000";
const ticks: [number, number, number, number][] = [
  [597, 228, 628, 259],
  [598, 446, 629, 477],
  [492, 449, 520, 477],
  [706, 586, 737, 555],
  [706, 694, 737, 663],
  [923, 586, 955, 554],
  [1142, 585, 1173, 554],
  [1142, 694, 1173, 663],
];

const CadDrawing = () => (
  <Drawing viewBox="170 108 1197 667">
    <g stroke={GREEN} strokeWidth="1" shapeRendering="crispEdges">
      <path d="M504.500 108V461M612.500 108V461M170 243.500H721M170 461.500H721" fill="none" />
      <path d="M721.500 462V775M939.500 462V775M1156.500 462V775M721 570.500H1156M721 678.500H1156" fill="none" />
    </g>
    <g stroke={GREEN} strokeWidth="1">
      {ticks.map(([a, b, c, d], i) => (
        <line key={i} x1={a} y1={b} x2={c} y2={d} />
      ))}
    </g>
    <path d="M721.500 108V243M939.500 108V243M1156.500 108V462M940 243.500H1156M940 461.500H1156" stroke={RED} fill="none" shapeRendering="crispEdges" />
    <rect x="721.500" y="243.500" width="218" height="218" fill="#b0b0b0" stroke="#00ffff" strokeWidth="3" />
    <g fontFamily='"Open Sans", sans-serif'>
      <g fontSize="31.500" fill="#fff">
        <text x="728.500" y="228">2.550</text>
        <text x="945.500" y="228">3.000</text>
        <text x="945.500" y="446">3.000</text>
        <text x="728.500" y="446" fill="#555">2.550</text>
      </g>
      <g fontSize="17.500" fill="#d2d2d2">
        <text x="815" y="612">3000</text>
        <text x="1033" y="612">3000</text>
        <text x="924" y="721">6000</text>
        <text transform="translate(583 150) rotate(-90)">3000</text>
        <text transform="translate(583 367) rotate(-90)">3000</text>
      </g>
    </g>
    <g strokeWidth="1.500" shapeRendering="crispEdges">
      <path d="M718 218.500h9M935 218.500h10M718 436h2M941 436h4" stroke="#ddd" />
      <path d="M723 436h4M935 436h3" stroke="#555" />
    </g>
  </Drawing>
);

const Markup = () => (
  <Annotations width="1367" height="775" viewBox="0 0 1367 775">
    <defs>
      <linearGradient id="blueFill" x1="0" y1="0" x2="0" y2="1">
        <stop offset="0" stopColor="#e4eefb" />
        <stop offset="1" stopColor="#7fa8e0" />
      </linearGradient>
      <linearGradient id="fadeLeft" gradientUnits="userSpaceOnUse" x1="947" y1="225" x2="800" y2="228">
        <stop offset="0" stopColor="#400808" />
        <stop offset="1" stopColor="#ff3c3c" />
      </linearGradient>
      <linearGradient id="fadeUp" gradientUnits="userSpaceOnUse" x1="962" y1="417" x2="966" y2="330">
        <stop offset="0" stopColor="#701010" />
        <stop offset="1" stopColor="#f03c3c" />
      </linearGradient>
      <linearGradient id="fadeDiag" gradientUnits="userSpaceOnUse" x1="1150" y1="132" x2="1050" y2="214">
        <stop offset="0" stopColor="#200404" />
        <stop offset="1" stopColor="#f03c3c" />
      </linearGradient>
    </defs>
    <polygon points={arrowPoints(947, 225, 768, 229.500, 13, 1.800, 4.500)} fill="url(#fadeLeft)" />
    <polygon points={arrowPoints(962, 417, 967, 241, 13, 1.800, 4.500)} fill="url(#fadeUp)" />
    <polygon points={arrowPoints(1150, 132, 882, 347, 16, 2.200, 5.500)} fill="url(#fadeDiag)" />
    <polygon points={arrowPoints(899, 377, 957, 419, 16, 2, 5.500)} fill="#f23c3c" />
    <g fill="none" strokeWidth="1">
      <ellipse cx="749.500" cy="219" rx="21" ry="16" stroke="#a82020" />
      <ellipse cx="970" cy="219" rx="15.500" ry="15" stroke="#a82020" />
      <ellipse cx="971" cy="435" rx="15.500" ry="18.500" stroke="#a82020" />
      <ellipse cx="863" cy="359" rx="41" ry="25.500" stroke="#ea4a4a" />
      <ellipse cx="1184.500" cy="97.500" rx="70.500" ry="30.500" stroke="#e23c3c" />
    </g>
  </Annotations>
);

const PropertyDialog = () => (
  <Dialog>
    <DialogTitle>
      <span>属性编辑器</span>
      <DialogClose>
        <svg width="10" height="10" viewBox="0 0 10 10">
          <rect x="0.500" y="1.500" width="9" height="7" fill="#fff" stroke="#555" />
          <path d="M3 3l4 4M7 3L3 7" stroke="#222" strokeWidth="1.300" />
        </svg>
      </DialogClose>
    </DialogTitle>
    <Frame>
      <Table>
        <HeadRow>
          <HeadCell />
          <HeadCell>属性名称</HeadCell>
          <HeadCell $value>属性值</HeadCell>
          <HeadCell>附加</HeadCell>
        </HeadRow>
        {props_.map((p, i) => (
          <DataRow key={i}>
            <NumCell $on={i === 0}>{i + 1}</NumCell>
            <NameCell $tone={p.tone ?? "normal"}>
              {i === 18 && <Expander>+</Expander>}
              <Txt s={p.name} />
            </NameCell>
            <ValueCell $on={i === 0}>{p.value && <Txt s={p.value} />}</ValueCell>
            <AddCell>{p.check && <Check />}</AddCell>
          </DataRow>
        ))}
      </Table>
      <ScrollBar>
        <ScrollEnd />
        <ScrollThumb />
        <ScrollTrack />
        <ScrollEnd $down />
      </ScrollBar>
    </Frame>
  </Dialog>
);

export default function App() {
  return (
    <Page>
      <GlobalStyle />
      <TopBar>
        {renderTools(topLeft)}
        <Tool>
          <Sigma>Σ</Sigma>
          <span>汇总计算</span>
        </Tool>
        {renderTools(topMiddle)}
        <ViewMode>
          <Icon name="rect2d" />
          <span>二维</span>
          <Caret $m={5} />
        </ViewMode>
        {renderTools(topRight)}
      </TopBar>
      <Body>
        <LeftPanel>
          <PanelTitle>
            <span>构件列表</span>
            <PanelControls>
              <PinBox>
                <svg width="9" height="10" viewBox="0 0 9 10">
                  <path d="M2.500 .5h4v5h-4zM.5 5.500h8M4.500 5.500V10M5 1v4" stroke="#111" fill="none" />
                </svg>
              </PinBox>
              <CloseMark>×</CloseMark>
            </PanelControls>
          </PanelTitle>
          <PanelTools>
            <Icon name="newItem" />
            <span>新建</span>
            <Caret $m={0} />
            <Icon name="xDelete" />
            <CopySlot>
              <Icon name="copyDoc" />
            </CopySlot>
          </PanelTools>
          <SearchRow>
            <SearchBox>搜索构件…</SearchBox>
            <Icon name="magnify" />
          </SearchRow>
          <TreeBox>
            <TreeRow>
              <TreeArrow />
              <DotLine />
              <Icon name="raft" />
              <TreeLabel>筏板基础</TreeLabel>
            </TreeRow>
            <TreeRow>
              <Elbow />
              <TreeSelected>
                <Icon name="gear" />
                <Latin>FB-1</Latin>
              </TreeSelected>
            </TreeRow>
          </TreeBox>
        </LeftPanel>
        <Main>
          <ToolRow>
            <Segment>
              <Gripper />
              {renderTools(editTools)}
            </Segment>
          </ToolRow>
          <ToolRow>
            <Segment>
              <Gripper />
              <Combo $w={57}>
                基础层
                <ComboArrow><Caret $m={0} /></ComboArrow>
              </Combo>
              <Combo $w={69}>
                基础
                <ComboArrow><Caret $m={0} /></ComboArrow>
              </Combo>
              <Combo $w={69}>
                筏板基础
                <ComboArrow><Caret $m={0} /></ComboArrow>
              </Combo>
              <Combo $w={70}>
                <Latin>FB-1</Latin>
                <ComboArrow><Caret $m={0} /></ComboArrow>
              </Combo>
              <Sep />
              {renderTools(componentTools)}
            </Segment>
            <Segment>
              <Gripper />
              {renderTools(axisTools)}
            </Segment>
          </ToolRow>
          <ToolRow $h={26} $after={2}>
            <Segment>
              <Gripper />
              {renderTools(drawLeft)}
              <Combo $w={54}>
                <span />
                <ComboArrow><Caret $m={0} /></ComboArrow>
              </Combo>
              {renderTools(drawRight)}
              <Caret $after={3} />
              {renderTools([tool("changeElev", "查改标高")])}
            </Segment>
            <Segment $grow>
              <Gripper />
            </Segment>
          </ToolRow>
          <Canvas>
            <CadDrawing />
            <ElevationInput>
              <InputSelection>-2.55</InputSelection>
            </ElevationInput>
          </Canvas>
        </Main>
      </Body>
      <PropertyDialog />
      <Markup />
    </Page>
  );
}
